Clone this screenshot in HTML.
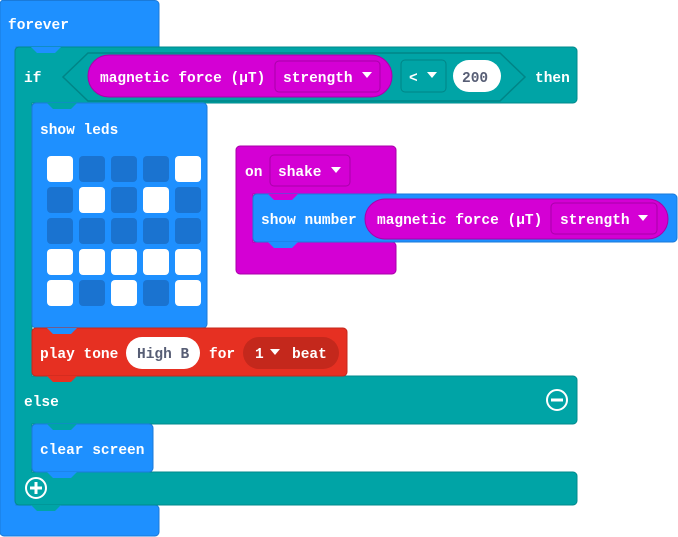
<!DOCTYPE html>
<html><head><meta charset="utf-8"><style>
html,body{margin:0;padding:0;background:#fff;width:678px;height:537px;overflow:hidden}
text{font-family:"Liberation Mono",monospace;font-weight:bold;font-size:14.5px;fill:#fff}
</style></head><body>
<svg width="678" height="537" viewBox="0 0 678 537" xmlns="http://www.w3.org/2000/svg">
<!-- forever -->
<path d="M4,0.5 H155 a4,4 0 0 1 4,4 V47 H16 V505 H155 a4,4 0 0 1 4,4 V532 a4,4 0 0 1 -4,4 H4 a4,4 0 0 1 -4,-4 V4 a4,4 0 0 1 4,-4z" fill="#1e90ff" stroke="#1a7ad9" stroke-width="1"/>
<text x="8" y="29">forever</text>
<!-- if block -->
<path d="M19,47 H573 a4,4 0 0 1 4,4 V99 a4,4 0 0 1 -4,4 H32 V376 H573 a4,4 0 0 1 4,4 V420 a4,4 0 0 1 -4,4 H32 V472 H573 a4,4 0 0 1 4,4 V501 a4,4 0 0 1 -4,4 H19 a4,4 0 0 1 -4,-4 V51 a4,4 0 0 1 4,-4z" fill="#00a4a6" stroke="#008a8c" stroke-width="1"/>
<polygon points="31,47 37,53 55,53 61,47" fill="#1e90ff"/>
<polygon points="31,505 37,511 55,511 61,505" fill="#00a4a6"/>
<text x="24" y="82">if</text>
<text x="24" y="406">else</text>
<!-- condition hexagon -->
<polygon points="88,53 500,53 525,77 500,101 88,101 63,77" fill="#00a4a6" stroke="#008587" stroke-width="1.5"/>
<rect x="88" y="55" width="304" height="42" rx="21" fill="#d400d4" stroke="#a900a9"/>
<text x="100" y="82">magnetic force (µT)</text>
<rect x="275" y="61" width="105" height="31" rx="4" fill="#d400d4" stroke="#a900a9"/>
<text x="283" y="82">strength</text>
<polygon points="362,72 372,72 367,78" fill="#fff"/>
<rect x="401" y="60" width="45" height="32" rx="4" fill="#00a4a6" stroke="#008587"/>
<text x="409" y="82">&lt;</text>
<polygon points="427,72 437,72 432,78" fill="#fff"/>
<rect x="453" y="60" width="48" height="32" rx="16" fill="#fff"/>
<text x="462" y="82" style="fill:#575e75">200</text>
<text x="535" y="82">then</text>
<!-- show leds -->
<path d="M36,103 H203 a4,4 0 0 1 4,4 V324 a4,4 0 0 1 -4,4 H36 a4,4 0 0 1 -4,-4 V107 a4,4 0 0 1 4,-4z" fill="#1e90ff" stroke="#1a7ad9"/>
<polygon points="47,103 53,109 71,109 77,103" fill="#00a4a6"/>
<text x="40" y="134">show leds</text>
<g>
<rect x="47" y="156" width="26" height="26" rx="4" fill="#fff"/><rect x="79" y="156" width="26" height="26" rx="4" fill="#1a73d0"/><rect x="111" y="156" width="26" height="26" rx="4" fill="#1a73d0"/><rect x="143" y="156" width="26" height="26" rx="4" fill="#1a73d0"/><rect x="175" y="156" width="26" height="26" rx="4" fill="#fff"/>
<rect x="47" y="187" width="26" height="26" rx="4" fill="#1a73d0"/><rect x="79" y="187" width="26" height="26" rx="4" fill="#fff"/><rect x="111" y="187" width="26" height="26" rx="4" fill="#1a73d0"/><rect x="143" y="187" width="26" height="26" rx="4" fill="#fff"/><rect x="175" y="187" width="26" height="26" rx="4" fill="#1a73d0"/>
<rect x="47" y="218" width="26" height="26" rx="4" fill="#1a73d0"/><rect x="79" y="218" width="26" height="26" rx="4" fill="#1a73d0"/><rect x="111" y="218" width="26" height="26" rx="4" fill="#1a73d0"/><rect x="143" y="218" width="26" height="26" rx="4" fill="#1a73d0"/><rect x="175" y="218" width="26" height="26" rx="4" fill="#1a73d0"/>
<rect x="47" y="249" width="26" height="26" rx="4" fill="#fff"/><rect x="79" y="249" width="26" height="26" rx="4" fill="#fff"/><rect x="111" y="249" width="26" height="26" rx="4" fill="#fff"/><rect x="143" y="249" width="26" height="26" rx="4" fill="#fff"/><rect x="175" y="249" width="26" height="26" rx="4" fill="#fff"/>
<rect x="47" y="280" width="26" height="26" rx="4" fill="#fff"/><rect x="79" y="280" width="26" height="26" rx="4" fill="#1a73d0"/><rect x="111" y="280" width="26" height="26" rx="4" fill="#fff"/><rect x="143" y="280" width="26" height="26" rx="4" fill="#1a73d0"/><rect x="175" y="280" width="26" height="26" rx="4" fill="#fff"/>
</g>
<!-- play tone -->
<path d="M36,328 H343 a4,4 0 0 1 4,4 V372 a4,4 0 0 1 -4,4 H36 a4,4 0 0 1 -4,-4 V332 a4,4 0 0 1 4,-4z" fill="#e63022" stroke="#c4281c"/>
<polygon points="47,328 53,334 71,334 77,328" fill="#1e90ff"/>
<polygon points="47,376 53,382 71,382 77,376" fill="#e63022"/>
<text x="40" y="358">play tone</text>
<rect x="126" y="337" width="74" height="32" rx="16" fill="#fff"/>
<text x="137" y="358" style="fill:#575e75">High B</text>
<text x="209" y="358">for</text>
<rect x="243" y="337" width="96" height="32" rx="16" fill="#c4281c"/>
<text x="255" y="358">1</text>
<polygon points="270,349 280,349 275,355" fill="#fff"/>
<text x="292" y="358">beat</text>
<!-- minus -->
<circle cx="557" cy="400" r="10" fill="none" stroke="#fff" stroke-width="2"/>
<rect x="551" y="398.5" width="12" height="3" fill="#fff"/>
<!-- clear screen -->
<path d="M36,424 H149 a4,4 0 0 1 4,4 V468 a4,4 0 0 1 -4,4 H36 a4,4 0 0 1 -4,-4 V428 a4,4 0 0 1 4,-4z" fill="#1e90ff" stroke="#1a7ad9"/>
<polygon points="47,424 53,430 71,430 77,424" fill="#00a4a6"/>
<polygon points="47,472 53,478 71,478 77,472" fill="#1e90ff"/>
<text x="40" y="454">clear screen</text>
<!-- plus -->
<circle cx="36" cy="488" r="10" fill="none" stroke="#fff" stroke-width="2"/>
<rect x="30" y="486.5" width="12" height="3" fill="#fff"/>
<rect x="34.5" y="482" width="3" height="12" fill="#fff"/>
<!-- on shake -->
<path d="M240,146 H392 a4,4 0 0 1 4,4 V194 H253 V242 H392 a4,4 0 0 1 4,4 V270 a4,4 0 0 1 -4,4 H240 a4,4 0 0 1 -4,-4 V150 a4,4 0 0 1 4,-4z" fill="#d400d4" stroke="#a900a9"/>
<text x="245" y="176">on</text>
<rect x="270" y="155" width="80" height="31" rx="4" fill="#d400d4" stroke="#a900a9"/>
<text x="278" y="176">shake</text>
<polygon points="331,167 341,167 336,173" fill="#fff"/>
<!-- show number -->
<path d="M257,194 H673 a4,4 0 0 1 4,4 V238 a4,4 0 0 1 -4,4 H257 a4,4 0 0 1 -4,-4 V198 a4,4 0 0 1 4,-4z" fill="#1e90ff" stroke="#1a7ad9"/>
<polygon points="268,194 274,200 292,200 298,194" fill="#d400d4"/>
<polygon points="268,242 274,248 292,248 298,242" fill="#1e90ff"/>
<text x="261" y="224">show number</text>
<rect x="365" y="199" width="303" height="40" rx="20" fill="#d400d4" stroke="#a900a9"/>
<text x="377" y="224">magnetic force (µT)</text>
<rect x="551" y="203" width="106" height="31" rx="4" fill="#d400d4" stroke="#a900a9"/>
<text x="560" y="224">strength</text>
<polygon points="638,215 648,215 643,221" fill="#fff"/>
</svg>
</body></html>
